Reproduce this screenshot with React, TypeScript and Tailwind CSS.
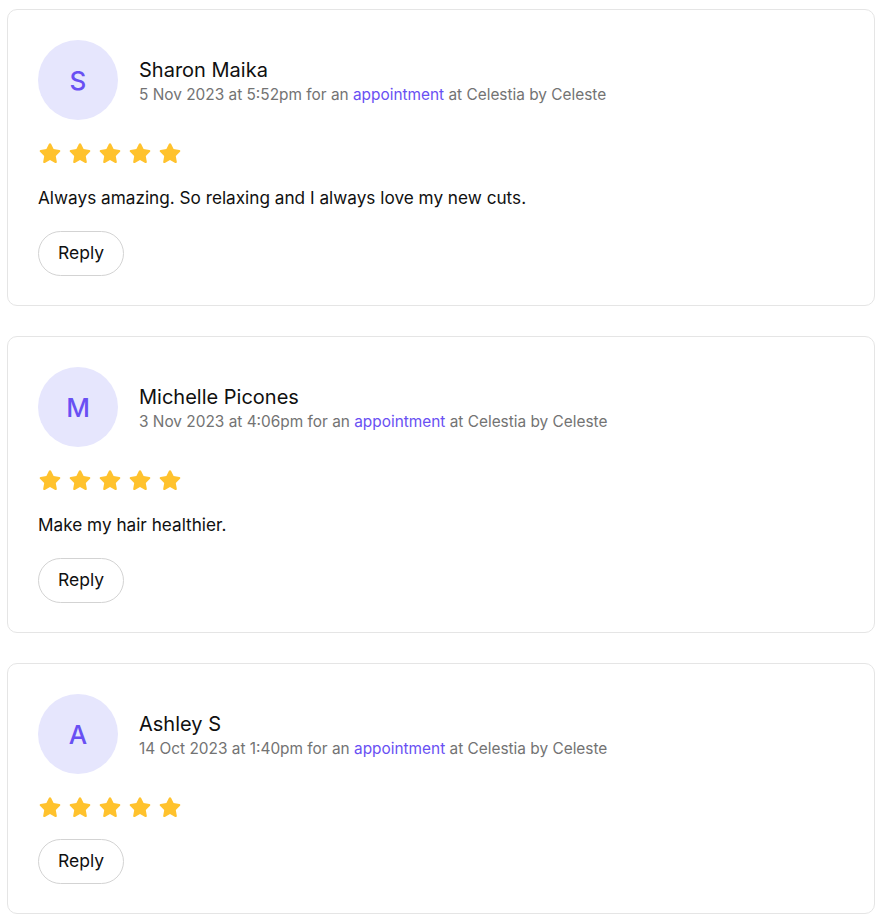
import React from "react";

const reviews = [
  { initial: "S", name: "Sharon Maika", date: "5 Nov 2023 at 5:52pm", text: "Always amazing. So relaxing and I always love my new cuts." },
  { initial: "M", name: "Michelle Picones", date: "3 Nov 2023 at 4:06pm", text: "Make my hair healthier." },
  { initial: "A", name: "Ashley S", date: "14 Oct 2023 at 1:40pm", text: "" },
];

function Star() {
  return (
    <svg width="24" height="24" viewBox="0 0 24 24">
      <path
        d="M12 2.2c.4 0 .8.2 1 .6l2.6 5.3 5.8.8c.9.1 1.3 1.2.6 1.9l-4.2 4.1 1 5.8c.2.9-.8 1.6-1.6 1.2L12 19.1l-5.2 2.8c-.8.4-1.8-.3-1.6-1.2l1-5.8L2 10.8c-.7-.7-.3-1.8.6-1.9l5.8-.8L11 2.8c.2-.4.6-.6 1-.6z"
        fill="#FFC22D"
      />
    </svg>
  );
}

export default function App() {
  return (
    <div className="px-[7px] pt-[9px] pb-[8px] flex flex-col gap-[30px] bg-white" style={{ fontFamily: "Inter, 'Noto Sans', sans-serif" }}>
      {reviews.map((r) => (
        <div key={r.name} className="border border-[#e5e5e5] rounded-[10px] w-[868px] px-[30px] pt-[30px] pb-[29px] flex flex-col">
          <div className="flex items-center gap-[21px]">
            <div className="w-[80px] h-[80px] rounded-full bg-[#e6e6fd] flex items-center justify-center text-[#6950f3] text-[26px] font-medium">
              {r.initial}
            </div>
            <div className="flex flex-col pt-[4px]">
              <div className="text-[20px] text-[#101010] leading-[26px]">{r.name}</div>
              <div className="text-[15.4px] text-[#737373] leading-[24px]">
                {r.date} for an <span className="text-[#6950f3]">appointment</span> at Celestia by Celeste
              </div>
            </div>
          </div>
          <div className="flex gap-[6px] mt-[21px]">
            {[0, 1, 2, 3, 4].map((i) => (
              <Star key={i} />
            ))}
          </div>
          {r.text && <div className="mt-[21px] text-[17.2px] text-[#101010] leading-[24px]">{r.text}</div>}
          <div className={r.text ? "mt-[21px]" : "mt-[20px]"}>
            <button className="h-[45px] px-[19px] rounded-full border border-[#d3d3d3] text-[17.5px] text-[#101010] bg-white">
              Reply
            </button>
          </div>
        </div>
      ))}
    </div>
  );
}
